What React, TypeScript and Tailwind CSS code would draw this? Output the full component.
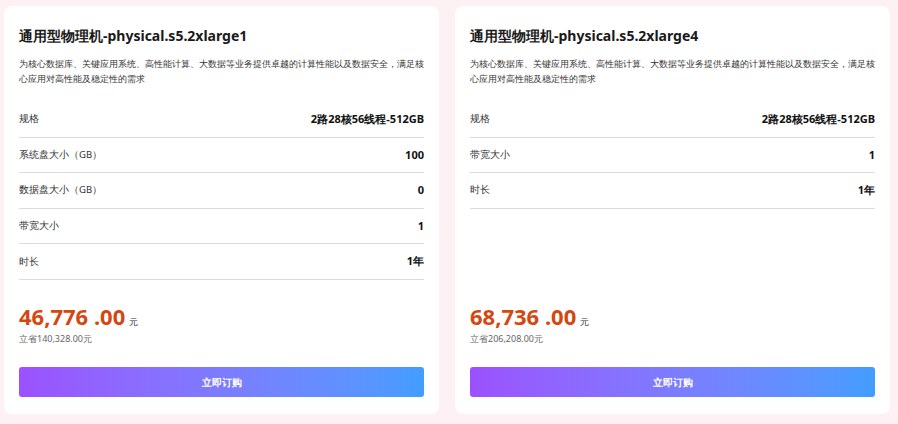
import React from 'react';

const cards = [
  {
    title: '通用型物理机-physical.s5.2xlarge1',
    rows: [
      ['规格', '2路28核56线程-512GB'],
      ['系统盘大小（GB）', '100'],
      ['数据盘大小（GB）', '0'],
      ['带宽大小', '1'],
      ['时长', '1年'],
    ],
    price: '46,776',
    save: '立省140,328.00元',
  },
  {
    title: '通用型物理机-physical.s5.2xlarge4',
    rows: [
      ['规格', '2路28核56线程-512GB'],
      ['带宽大小', '1'],
      ['时长', '1年'],
    ],
    price: '68,736',
    save: '立省206,208.00元',
  },
];

const App: React.FC = () => {
  return (
    <div className="w-[898px] h-[424px] bg-[#fdf1f4] flex gap-4 pl-1 pr-2 pt-1.5 pb-2.5 font-['Liberation_Sans','Noto_Sans_CJK_SC',sans-serif]">
      {cards.map((c) => (
        <div key={c.title} className="flex-1 bg-white rounded-lg px-[15px] pt-5 pb-[17px] flex flex-col">
          <h3 className="text-[14px] font-bold text-[#1a1a1a] leading-5">{c.title}</h3>
          <p className="mt-2.5 text-[9.2px] leading-[15px] text-[#333]">
            为核心数据库、关键应用系统、高性能计算、大数据等业务提供卓越的计算性能以及数据安全，满足核心应用对高性能及稳定性的需求
          </p>
          <div className="mt-[16px]">
            {c.rows.map(([k, v]) => (
              <div key={k} className="h-[35.6px] flex items-center justify-between border-b border-[#dcdcdc]">
                <span className="text-[9.5px] text-[#333]">{k}</span>
                <span className="text-[11px] font-bold text-[#111]">{v}</span>
              </div>
            ))}
          </div>
          <div className="flex-1" />
          <div className="flex items-baseline gap-1">
            <span className="text-[22px] font-bold text-[#d4470f] leading-7">{c.price} .00</span>
            <span className="text-[9px] text-[#333]">元</span>
          </div>
          <div className="text-[9px] text-[#666] mt-0.5">{c.save}</div>
          <button className="mt-[22px] h-[30px] rounded-[3px] bg-gradient-to-r from-[#9b51ff] to-[#419dff] text-white text-[10px] font-bold">
            立即订购
          </button>
        </div>
      ))}
    </div>
  );
};

export default App;
